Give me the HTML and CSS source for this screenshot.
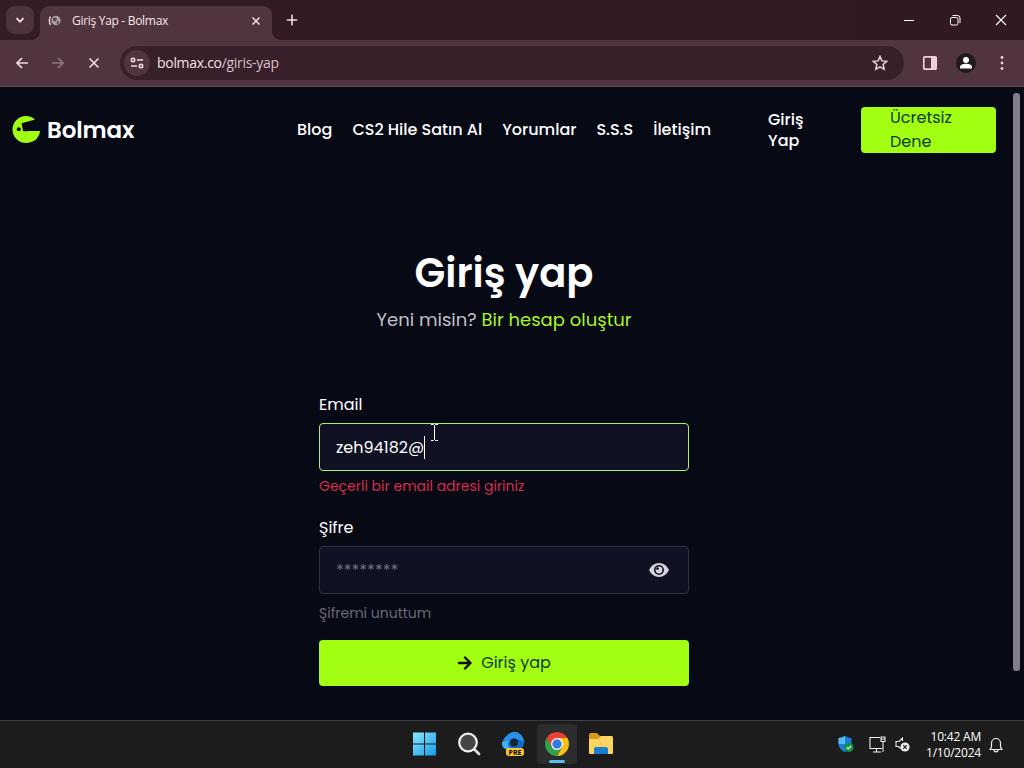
FILE: index.html
```html
<!DOCTYPE html>
<html lang="tr">
<head>
  <meta charset="UTF-8">
  <title>Giriş Yap - Bolmax</title>
  <link rel="stylesheet" href="styles.css">
</head>
<body>
<div class="tabs">
  <div class="tab-search">
    <svg width="10" height="10" viewBox="0 0 10 10"><path d="M1.5 3.2 5 6.7l3.500-3.500" fill="none" stroke="#f3dfe6" stroke-width="1.8"/></svg>
  </div>
  <div class="tab">
    <svg class="favicon" width="14" height="14" viewBox="0 0 14 14">
      <path d="M2.500 2.500Q.2 6.500 2.500 11" fill="none" stroke="#ead2da" stroke-width="1.500"/>
      <circle cx="8" cy="6.500" r="4.700" fill="#a9a1a5"/>
      <path d="M5 4l3-.5 1 2-2 2-2-1zM9 7.500l2-1-.5 3-2 1z" fill="#54464b"/>
    </svg>
    <span class="tab-title">Giriş Yap - Bolmax</span>
    <svg width="10" height="10" viewBox="0 0 10 10"><path d="M1.500 1.500l7 7m0-7l-7 7" stroke="#f3dfe6" stroke-width="1.500"/></svg>
  </div>
  <svg class="new-tab" width="12" height="12" viewBox="0 0 12 12"><path d="M6 .8v10.400M.8 6h10.400" stroke="#f3dfe6" stroke-width="1.600"/></svg>
  <div class="window-buttons">
    <svg width="12" height="12" viewBox="0 0 12 12"><path d="M1 6.500h10" stroke="#fff"/></svg>
    <svg width="12" height="12" viewBox="0 0 12 12" fill="none" stroke="#fff"><rect x="1.500" y="3.500" width="7.500" height="7.500" rx="1.500"/><path d="M3.500 1.500h5a2.500 2.500 0 0 1 2.500 2.500v5"/></svg>
    <svg width="12" height="12" viewBox="0 0 12 12"><path d="M1 1l10 10m0-10L1 11" stroke="#fff" stroke-width="1.100"/></svg>
  </div>
</div>

<div class="toolbar">
  <svg class="back" width="14" height="12" viewBox="0 0 14 12"><path d="M13 6H2m5-5L2 6l5 5" fill="none" stroke="#f0dae1" stroke-width="1.700"/></svg>
  <svg class="forward" width="14" height="12" viewBox="0 0 14 12"><path d="M1 6h11M7 1l5 5-5 5" fill="none" stroke="#8f7580" stroke-width="1.700"/></svg>
  <svg class="stop" width="12" height="12" viewBox="0 0 12 12"><path d="M1.500 1.500l9 9m0-9l-9 9" stroke="#f0dae1" stroke-width="1.700"/></svg>
  <div class="address">
    <span class="site-info">
      <svg width="14" height="12" viewBox="0 0 14 12" fill="none" stroke="#f0dae1" stroke-width="1.600"><circle cx="3" cy="3" r="1.700"/><path d="M7 3h6M1 9h6"/><circle cx="11" cy="9" r="1.700"/></svg>
    </span>
    <span class="url">bolmax.co<i>/giris-yap</i></span>
    <svg width="16" height="16" viewBox="0 0 16 16"><path d="M8 1.400l1.900 4.500 4.900.4-3.700 3.200 1.100 4.800L8 11.800l-4.200 2.500 1.100-4.800L1.200 6.300l4.900-.4z" fill="none" stroke="#ecd3dd" stroke-width="1.500"/></svg>
  </div>
  <svg class="panel" width="16" height="16" viewBox="0 0 16 16"><rect x="1.800" y="1.800" width="12.400" height="12.400" rx="1" fill="none" stroke="#ecd0dc" stroke-width="1.700"/><path d="M9 2h5v12H9z" fill="#ecd0dc"/></svg>
  <span class="profile">
    <svg width="14" height="14" viewBox="0 0 14 14" fill="#fff"><circle cx="7" cy="4" r="3"/><path d="M1 12.500V11c0-2.500 4-3.200 6-3.200s6 .7 6 3.200v1.500z"/></svg>
  </span>
  <svg class="more" width="4" height="16" viewBox="0 0 4 16" fill="#ecd3dd"><circle cx="2" cy="2.500" r="1.400"/><circle cx="2" cy="8" r="1.400"/><circle cx="2" cy="13.500" r="1.400"/></svg>
</div>

<div class="viewport">
  <div class="page">
    <header>
      <a class="brand">
        <svg width="28" height="28" viewBox="0 0 28 28"><path d="M23 3.600C20.500 1.200 17.500 0 14 0a13.500 13.500 0 1 0 0 27c7.500 0 13.500-5 14-12H17q-4 .6-6 0L9.600 7.200z" fill="#a3ff12"/><circle cx="6.800" cy="13.300" r="2" fill="#070915"/></svg>
        <span>Bolmax</span>
      </a>
      <nav>
        <a>Blog</a>
        <a>CS2 Hile Satın Al</a>
        <a>Yorumlar</a>
        <a>S.S.S</a>
        <a>İletişim</a>
      </nav>
      <a class="login">Giriş Yap</a>
      <a class="try">Ücretsiz Dene</a>
    </header>

    <main>
      <h1>Giriş yap</h1>
      <p class="signup">Yeni misin? <a>Bir hesap oluştur</a></p>
      <form>
        <label>Email</label>
        <div class="field active">
          <span>zeh94182@</span><span class="caret"></span>
          <svg class="pointer" width="9" height="17" viewBox="0 0 9 17"><path d="M1 .5h2.500l1 1 1-1H8M4.500 1v15M1 16.500h2.500l1-1 1 1H8" fill="none" stroke="#fff"/></svg>
        </div>
        <p class="error">Geçerli bir email adresi giriniz</p>
        <label>Şifre</label>
        <div class="field">
          <span class="placeholder">********</span>
          <svg class="eye" width="20" height="14" viewBox="0 0 20 14"><path d="M0 7Q3.500 0 10 0t10 7q-3.500 7-10 7T0 7z" fill="#d3d4df"/><circle cx="10" cy="7" r="4.200" fill="#d3d4df" stroke="#101122" stroke-width="1.600"/><circle cx="8.500" cy="5.600" r="1.400" fill="#101122"/></svg>
        </div>
        <p class="forgot">Şifremi unuttum</p>
        <div class="submit">
          <svg width="15" height="14" viewBox="0 0 15 14"><path d="M2 7h11.500M8 1.500L13.500 7 8 12.500" fill="none" stroke="#071014" stroke-width="2.400" stroke-linecap="round" stroke-linejoin="round"/></svg>
          <span>Giriş yap</span>
        </div>
      </form>
    </main>
  </div>
  <div class="scrollbar"><div class="thumb"></div></div>
</div>

<div class="taskbar">
  <div class="apps">
    <div class="app">
      <svg width="24" height="24" viewBox="0 0 24 24">
        <defs><linearGradient id="win" x2="1" y2="1"><stop stop-color="#8be6ff"/><stop offset="1" stop-color="#159be8"/></linearGradient></defs>
        <path d="M0 .5h11v11H0zM12 .5h11v11H12zM0 12.500h11v11H0zM12 12.500h11v11H12z" fill="url(#win)"/>
      </svg>
    </div>
    <div class="app">
      <svg width="24" height="24" viewBox="0 0 24 24"><path d="M17 17l5 5" stroke="#ddd" stroke-width="2.800" stroke-linecap="round"/><circle cx="11" cy="10.500" r="8.800" fill="#454545" stroke="#eee" stroke-width="2.200"/></svg>
    </div>
    <div class="app">
      <svg width="26" height="26" viewBox="0 0 26 26">
        <path d="M13 1Q17 0 21 4q4 4 3 9l-3 6H9Q1 18 2 11q1-3 4-5 3-4 7-5z" fill="#1267c8"/>
        <path d="M13 1Q17 0 21 4q3 3 3 7l-7-3q-6-1-9 5l-5-3Q6 3 13 1z" fill="#2b91e8"/>
        <path d="M2 11l6-1q-1 7 6 9l-3 1Q1 18 2 11z" fill="#42b4ec"/>
        <circle cx="14" cy="11.500" r="4" fill="#132334"/>
        <rect x="6" y="17" width="18" height="8" rx="3" fill="#f9c92c"/>
        <text x="15" y="23.700" text-anchor="middle" class="pre">PRE</text>
      </svg>
    </div>
    <div class="app current">
      <svg width="24" height="24" viewBox="0 0 24 24">
        <path d="M1.610 6A12 12 0 0 1 22.390 6H12L6.800 15z" fill="#e94235"/>
        <path d="M22.390 6A12 12 0 0 1 12 24l5.200-9L12 6z" fill="#fbc116"/>
        <path d="M12 24A12 12 0 0 1 1.610 6L6.800 15h10.400z" fill="#34a24d"/>
        <circle cx="12" cy="12" r="5.900" fill="#fff"/><circle cx="12" cy="12" r="4.700" fill="#3478e5"/>
      </svg>
    </div>
    <div class="app">
      <svg width="26" height="24" viewBox="0 0 26 24">
        <path d="M1 3q0-2 2-2h6l3 3h11q2 0 2 2v6H1z" fill="#d99818"/>
        <path d="M1 7h9l3-3h10q2 0 2 2v15q0 1-1 1H2q-1 0-1-1z" fill="#fcd462"/>
        <path d="M6 22v-5q0-2 2-2h10q2 0 2 2v5z" fill="#1a7fd0"/>
      </svg>
    </div>
  </div>
  <div class="tray">
    <svg class="shield" width="16" height="17" viewBox="0 0 16 17"><path d="M7 0Q4 2 .5 2v6q0 5 6.500 8 6.500-3 6.500-8V2Q10 2 7 0z" fill="#1680d8"/><path d="M7 0Q4 2 .5 2v6H7z" fill="#55bdf0"/><circle cx="11" cy="11.500" r="4.500" fill="#13913b"/><path d="M8.800 11.500l1.500 1.500 2.700-3" fill="none" stroke="#fff" stroke-width="1.200"/></svg>
    <svg class="network" width="17" height="17" viewBox="0 0 17 17" fill="none" stroke="#eee" stroke-width="1.100"><path d="M11 1.500H1v11h12M7.500 13v3M4 16h8M14 6v10"/><path d="M12 1h4v4.500h-4zM12 3h4"/></svg>
    <svg class="volume" width="15" height="15" viewBox="0 0 15 15"><path d="M7.500 4V1L4 4.500H1v5h2.500l2 2" fill="none" stroke="#eee" stroke-width="1.100"/><circle cx="10" cy="10" r="4.600" fill="#eee"/><path d="M8.200 8.200l3.600 3.600m0-3.600l-3.600 3.600" stroke="#1c1c1c" stroke-width="1.100"/></svg>
    <div class="clock"><span>10:42 AM</span><span class="date">1/10/2024</span></div>
    <svg width="14" height="16" viewBox="0 0 14 16" fill="none" stroke="#eee" stroke-width="1.200"><path d="M2.500 10V6a4.500 4.500 0 0 1 9 0v4l1.500 2.500H1zM5 12.800a2 2 0 0 0 4 0"/></svg>
  </div>
</div>
</body>
</html>
```

FILE: styles.css
```css
* {
  box-sizing: border-box;
}

body {
  height: 768px;
  margin: 0;
  overflow: hidden;
  background: #070915;
  color: #fff;
  font-family: Poppins, Inter, sans-serif;
}

svg {
  display: block;
  flex: none;
}

.tabs {
  display: flex;
  height: 40px;
  padding-left: 6px;
  background: linear-gradient(90deg, #341c24, #301921);
  font-family: "Open Sans", sans-serif;
}

.tab-search {
  display: flex;
  align-items: center;
  justify-content: center;
  width: 28px;
  height: 28px;
  margin: 6px 6px 0 0;
  border-radius: 9px;
  background: #4d333d;
}

.tab {
  position: relative;
  display: flex;
  align-items: center;
  width: 232px;
  height: 34px;
  margin-top: 6px;
  padding: 0 11px 5px 8px;
  border-radius: 9px 9px 0 0;
  background: #50353f;
}

/* flared feet of the active tab */
.tab::before,
.tab::after {
  content: "";
  position: absolute;
  bottom: 0;
  width: 8px;
  height: 8px;
}

.tab::before {
  left: -8px;
  background: radial-gradient(circle at 0 0, transparent 7.5px, #50353f 8px);
}

.tab::after {
  right: -8px;
  background: radial-gradient(circle at 100% 0, transparent 7.5px, #50353f 8px);
}

.tab-title {
  flex: 1;
  margin-left: 10px;
  color: #f6e4ea;
  font-size: 12px;
  letter-spacing: -0.3px;
}

.new-tab {
  margin: 14px 0 0 14px;
}

.window-buttons {
  display: flex;
  gap: 34px;
  margin: 14px 17px 0 auto;
}

.toolbar {
  display: flex;
  align-items: center;
  height: 47px;
  padding: 0 20px 1px 15px;
  border-bottom: 1px solid #66525a;
  background: #50353f;
}

.forward {
  margin-left: 22px;
}

.stop {
  margin-left: 23px;
}

.address {
  display: flex;
  align-items: center;
  width: 784px;
  height: 34px;
  margin-left: 20px;
  padding: 0 16px 0 4px;
  border-radius: 17px;
  background: #38202a;
  font-family: "Open Sans", sans-serif;
}

.site-info {
  display: flex;
  align-items: center;
  justify-content: center;
  width: 26px;
  height: 26px;
  border-radius: 50%;
  background: #50353f;
}

.url {
  flex: 1;
  margin-left: 7px;
  color: #f4e0e7;
  font-size: 14px;
  letter-spacing: -0.3px;
}

.url i {
  color: #d9bfc9;
  font-style: normal;
}

.panel {
  margin-left: 18px;
}

.profile {
  display: flex;
  align-items: center;
  justify-content: center;
  width: 20px;
  height: 20px;
  margin-left: 18px;
  border-radius: 50%;
  background: #20191d;
}

.more {
  margin-left: 24px;
}

.viewport {
  display: flex;
  height: 633px;
}

.page {
  width: 1008px;
}

.scrollbar {
  width: 16px;
  padding: 6px 4px 0 5px;
}

.thumb {
  height: 578px;
  border-radius: 3px;
  background: #7f7f8c;
}

header {
  display: flex;
  align-items: center;
  height: 86px;
  padding: 0 12px;
  font-size: 16px;
  font-weight: 500;
}

.brand {
  display: flex;
  align-items: center;
  gap: 7px;
  width: 285px;
  font-size: 23px;
  font-weight: 600;
  letter-spacing: -0.1px;
}

nav {
  display: flex;
  gap: 20px;
  width: 471px;
  padding-bottom: 2px;
  white-space: nowrap;
}

.login {
  width: 93px;
  padding-right: 45px;
  line-height: 21px;
}

.try {
  display: flex;
  align-items: center;
  width: 135px;
  height: 46px;
  padding: 0 29px;
  border-radius: 4px;
  background: #a3ff12;
  color: #0b3c25;
  font-weight: 400;
  line-height: 24px;
}

main {
  display: flex;
  flex-direction: column;
  align-items: center;
}

h1 {
  margin: 73px 0 0;
  font-size: 40px;
  font-weight: 600;
  line-height: 54px;
}

.signup {
  margin: 6px 0 0;
  color: #c1c2c9;
  font-size: 18px;
  line-height: 28px;
}

.signup a {
  color: #a8f62b;
}

form {
  width: 370px;
  margin-top: 59px;
}

label {
  display: block;
  height: 30px;
  font-size: 16px;
  line-height: 24px;
}

.field {
  position: relative;
  display: flex;
  align-items: center;
  height: 48px;
  padding: 0 19px 0 16px;
  border: 1px solid #30313e;
  border-radius: 4px;
  background: #101122;
  font-size: 16px;
}

.field.active {
  border-color: #b4ee5d;
}

.caret {
  width: 1px;
  height: 23px;
  background: #fff;
}

.pointer {
  position: absolute;
  left: 110px;
  top: 0;
}

.error {
  height: 41px;
  margin: 4px 0 0;
  color: #d52d4c;
  font-size: 14px;
  line-height: 22px;
}

.placeholder {
  color: #717281;
}

.eye {
  margin-left: auto;
}

.forgot {
  height: 38px;
  margin: 8px 0 0;
  color: #696a75;
  font-size: 14px;
  line-height: 22px;
}

.submit {
  display: flex;
  align-items: center;
  justify-content: center;
  gap: 9px;
  height: 46px;
  padding-bottom: 1px;
  border-radius: 4px;
  background: #a3ff12;
  color: #0b3c25;
  font-size: 16px;
}

.taskbar {
  position: relative;
  display: flex;
  justify-content: flex-end;
  height: 48px;
  border-top: 1px solid #3c3c42;
  background: #1c1c1c;
}

.apps {
  position: absolute;
  left: 405px;
  top: 3px;
  display: flex;
  gap: 4px;
}

.app {
  display: flex;
  align-items: center;
  justify-content: center;
  width: 40px;
  height: 40px;
  border-radius: 4px;
}

.current {
  position: relative;
  background: #2c2c2c;
}

.current::after {
  content: "";
  position: absolute;
  bottom: 1px;
  width: 16px;
  height: 3px;
  border-radius: 2px;
  background: #54bde8;
}

.pre {
  font: bold 7px "Open Sans", sans-serif;
}

.tray {
  display: flex;
  align-items: center;
  padding-right: 21px;
}

.network {
  margin-left: 15px;
}

.volume {
  margin-left: 9px;
}

.clock {
  display: flex;
  flex-direction: column;
  align-items: flex-end;
  width: 71px;
  margin-right: 8px;
  font: 12px/16px "Open Sans", sans-serif;
  letter-spacing: -0.2px;
}
```
